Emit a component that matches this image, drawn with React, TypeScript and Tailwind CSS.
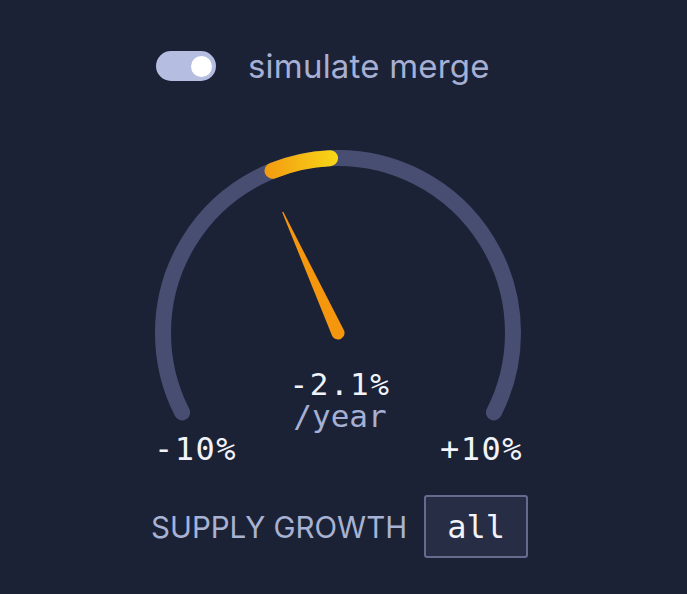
import React from 'react';

const MONO = { fontFamily: '"DejaVu Sans Mono", "Liberation Mono", monospace' };

function Toggle() {
  return (
    <div className="w-[60px] h-[30px] rounded-full bg-[#b5bee0] flex items-center justify-end pr-[4px]">
      <div className="w-[21px] h-[21px] rounded-full bg-white" />
    </div>
  );
}

function Gauge({ value }: { value: number }) {
  const cx = 187;
  const cy = 193;
  const r = 175;
  const span = 117;
  const cap = 2.6; // degrees taken by the round cap
  const pt = (deg: number) => {
    const a = (deg * Math.PI) / 180;
    return [cx + r * Math.sin(a), cy - r * Math.cos(a)];
  };
  const [lx, ly] = pt(-span);
  const [rx, ry] = pt(span);
  const angle = (value / 10) * span;
  const [hx, hy] = pt(angle + cap);
  const [ex, ey] = pt(-cap);

  return (
    <svg className="absolute left-0 top-0" width="375" height="300" viewBox="0 0 375 300">
      <defs>
        <linearGradient id="hl" gradientUnits="userSpaceOnUse" x1={hx - 8} y1="0" x2={ex + 8} y2="0">
          <stop offset="0" stopColor="#f39a10" />
          <stop offset="1" stopColor="#f8d718" />
        </linearGradient>
      </defs>
      <path
        d={`M ${lx} ${ly} A ${r} ${r} 0 1 1 ${rx} ${ry}`}
        fill="none"
        stroke="#474e72"
        strokeWidth="16"
        strokeLinecap="round"
      />
      <path
        d={`M ${hx} ${hy} A ${r} ${r} 0 0 1 ${ex} ${ey}`}
        fill="none"
        stroke="url(#hl)"
        strokeWidth="16"
        strokeLinecap="round"
      />
      <g transform={`translate(${cx} ${cy}) rotate(${angle})`}>
        <path d="M -0.6 -133 L 0.6 -133 L 6.5 0 A 6.5 6.5 0 0 1 -6.5 0 Z" fill="#f5960f" />
      </g>
    </svg>
  );
}

export default function App() {
  return (
    <div
      className="w-[687px] h-[594px] bg-[#1b2236] flex flex-col"
      style={{ fontFamily: 'Inter, "Noto Sans", sans-serif' }}
    >
      {/* merge toggle */}
      <div className="ml-[156px] mt-[51px] flex items-center gap-[32px]">
        <Toggle />
        <span className="text-[33px] leading-[30px] tracking-[0.2px] text-[#a6b0d4]">simulate merge</span>
      </div>

      {/* gauge */}
      <div className="relative ml-[151px] mt-[59px] w-[375px] flex flex-col">
        <Gauge value={-2.1} />
        <div className="relative flex flex-col items-center pt-[229px] pl-[3px]" style={MONO}>
          <span className="text-[31px] leading-[31px] tracking-[1.5px] text-[#f1f3f9]">-2.1%</span>
          <span className="text-[31px] leading-[32px] text-[#a6b0d4]">/year</span>
        </div>
        <div
          className="relative flex justify-between mt-[1px] pl-[3px] pr-[3px] text-[32px] leading-[32px] tracking-[1.5px] text-[#f1f3f9]"
          style={MONO}
        >
          <span>-10%</span>
          <span>+10%</span>
        </div>
      </div>

      {/* supply growth */}
      <div className="ml-[151px] mt-[30px] flex items-center gap-[17px]">
        <span className="text-[29.5px] leading-[28px] text-[#a8b2d3]">SUPPLY GROWTH</span>
        <div
          className="w-[104px] h-[63px] rounded-[3px] border-2 border-[#636c8c] bg-[#262d45] flex items-center justify-center text-[32px] text-[#f1f3f9]"
          style={MONO}
        >
          all
        </div>
      </div>
    </div>
  );
}
